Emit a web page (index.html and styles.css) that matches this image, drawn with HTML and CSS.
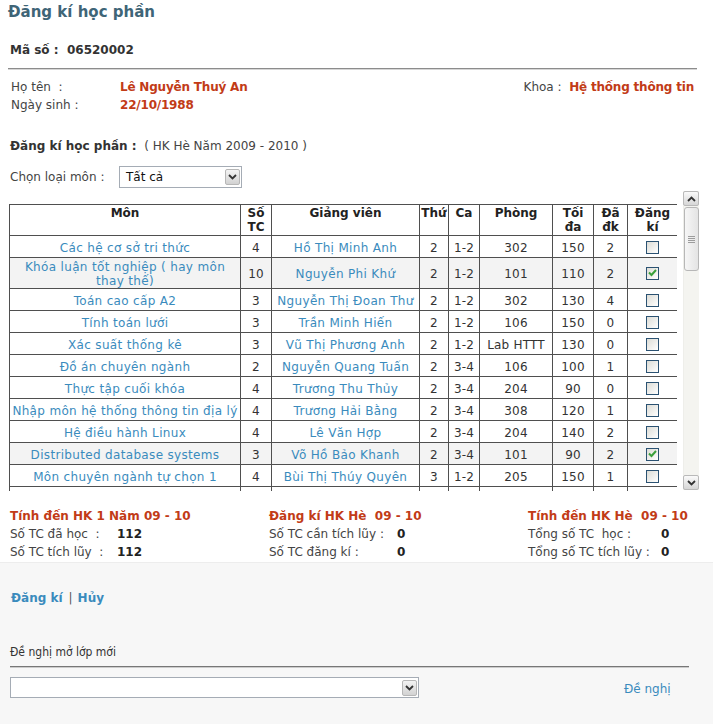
FILE: index.html
```html
<!DOCTYPE html>
<html lang="vi">
<head>
<meta charset="utf-8">
<title>Đăng kí học phần</title>
<link rel="stylesheet" href="styles.css">
</head>
<body>
<div class="top">
  <h1 class="title">Đăng kí học phần</h1>
  <div class="ms">Mã số :&nbsp; 06520002</div>
  <div class="rule"></div>
  <div class="info">
    <div class="info-left">
      <span class="lbl">Họ tên&nbsp; :</span><span class="val">Lê Nguyễn Thuý An</span>
      <span class="lbl">Ngày sinh :</span><span class="val">22/10/1988</span>
    </div>
    <div class="info-right"><span class="lbl2">Khoa :&nbsp; </span><span class="val">Hệ thống thông tin</span></div>
  </div>
  <div class="ky"><b>Đăng kí học phần :</b>&nbsp; ( HK Hè Năm 2009 - 2010 )</div>
  <div class="filter">
    <span class="flabel">Chọn loại môn :</span>
    <div class="sel sel-small"><span class="sel-text">Tất cả</span><span class="sel-btn"><svg width="9" height="6" viewBox="0 0 9 6"><path d="M1 1 L4.5 4.5 L8 1" fill="none" stroke="#333" stroke-width="1.8"/></svg></span></div>
  </div>

  <div class="grid-area">
    <div class="grid-view">
      <table class="grid">
        <colgroup>
          <col style="width:231px"><col style="width:31px"><col style="width:148px"><col style="width:29px"><col style="width:31px"><col style="width:73px"><col style="width:41px"><col style="width:34px"><col style="width:50px">
        </colgroup>
        <thead>
          <tr><th>Môn</th><th>Số<br>TC</th><th>Giảng viên</th><th>Thứ</th><th>Ca</th><th>Phòng</th><th>Tối<br>đa</th><th>Đã<br>đk</th><th>Đăng<br>kí</th></tr>
        </thead>
        <tbody>
          <tr><td class="lk">Các hệ cơ sở tri thức</td><td>4</td><td class="lk">Hồ Thị Minh Anh</td><td>2</td><td>1-2</td><td>302</td><td>150</td><td>2</td><td><span class="cb"></span></td></tr>
          <tr class="sel-row"><td class="lk">Khóa luận tốt nghiệp ( hay môn thay thế)</td><td>10</td><td class="lk">Nguyễn Phi Khứ</td><td>2</td><td>1-2</td><td>101</td><td>110</td><td>2</td><td><span class="cb on"><svg width="9" height="8" viewBox="0 0 9 8"><path d="M1 3.5 L3.5 6 L8 1" fill="none" stroke="#3aa03a" stroke-width="2"/></svg></span></td></tr>
          <tr><td class="lk">Toán cao cấp A2</td><td>3</td><td class="lk">Nguyễn Thị Đoan Thư</td><td>2</td><td>1-2</td><td>302</td><td>130</td><td>4</td><td><span class="cb"></span></td></tr>
          <tr><td class="lk">Tính toán lưới</td><td>3</td><td class="lk">Trần Minh Hiến</td><td>2</td><td>1-2</td><td>106</td><td>150</td><td>0</td><td><span class="cb"></span></td></tr>
          <tr><td class="lk">Xác suất thống kê</td><td>3</td><td class="lk">Vũ Thị Phương Anh</td><td>2</td><td>1-2</td><td>Lab HTTT</td><td>130</td><td>0</td><td><span class="cb"></span></td></tr>
          <tr><td class="lk">Đồ án chuyên ngành</td><td>2</td><td class="lk">Nguyễn Quang Tuấn</td><td>2</td><td>3-4</td><td>106</td><td>100</td><td>1</td><td><span class="cb"></span></td></tr>
          <tr><td class="lk">Thực tập cuối khóa</td><td>4</td><td class="lk">Trương Thu Thủy</td><td>2</td><td>3-4</td><td>204</td><td>90</td><td>0</td><td><span class="cb"></span></td></tr>
          <tr><td class="lk">Nhập môn hệ thống thông tin địa lý</td><td>4</td><td class="lk">Trương Hải Bằng</td><td>2</td><td>3-4</td><td>308</td><td>120</td><td>1</td><td><span class="cb"></span></td></tr>
          <tr><td class="lk">Hệ điều hành Linux</td><td>4</td><td class="lk">Lê Văn Hợp</td><td>2</td><td>3-4</td><td>204</td><td>140</td><td>2</td><td><span class="cb"></span></td></tr>
          <tr class="sel-row"><td class="lk">Distributed database systems</td><td>3</td><td class="lk">Võ Hồ Bảo Khanh</td><td>2</td><td>3-4</td><td>101</td><td>90</td><td>2</td><td><span class="cb on"><svg width="9" height="8" viewBox="0 0 9 8"><path d="M1 3.5 L3.5 6 L8 1" fill="none" stroke="#3aa03a" stroke-width="2"/></svg></span></td></tr>
          <tr><td class="lk">Môn chuyên ngành tự chọn 1</td><td>4</td><td class="lk">Bùi Thị Thúy Quyên</td><td>3</td><td>1-2</td><td>205</td><td>150</td><td>1</td><td><span class="cb"></span></td></tr>
          <tr><td class="lk">Môn chuyên ngành tự chọn 2</td><td>4</td><td class="lk">Đỗ Phúc</td><td>3</td><td>3-4</td><td>302</td><td>150</td><td>0</td><td><span class="cb"></span></td></tr>
        </tbody>
      </table>
    </div>
    <div class="vscroll">
      <div class="sb-btn"><svg width="9" height="6" viewBox="0 0 9 6"><path d="M1 5 L4.5 1.5 L8 5" fill="none" stroke="#333" stroke-width="1.8"/></svg></div>
      <div class="sb-track">
        <div class="sb-thumb"><span class="grip"></span></div>
      </div>
      <div class="sb-btn"><svg width="9" height="6" viewBox="0 0 9 6"><path d="M1 1 L4.5 4.5 L8 1" fill="none" stroke="#333" stroke-width="1.8"/></svg></div>
    </div>
  </div>

  <div class="stats">
    <div class="stat-col">
      <div class="stat-head">Tính đến HK 1 Năm 09 - 10</div>
      <div class="stat-row"><span class="sl w1">Số TC đã học&nbsp; :</span><b>112</b></div>
      <div class="stat-row"><span class="sl w1">Số TC tích lũy&nbsp; :</span><b>112</b></div>
    </div>
    <div class="stat-col">
      <div class="stat-head">Đăng kí HK Hè&nbsp; 09 - 10</div>
      <div class="stat-row"><span class="sl w2">Số TC cần tích lũy :</span><b>0</b></div>
      <div class="stat-row"><span class="sl w2">Số TC đăng kí :</span><b>0</b></div>
    </div>
    <div class="stat-col">
      <div class="stat-head">Tính đến HK Hè&nbsp; 09 - 10</div>
      <div class="stat-row"><span class="sl w3">Tổng số TC&nbsp; học :</span><b>0</b></div>
      <div class="stat-row"><span class="sl w3">Tổng số TC tích lũy :</span><b>0</b></div>
    </div>
  </div>
</div>

<div class="bottom">
  <div class="actions"><a class="act">Đăng kí</a><span class="bar">|</span><a class="act">Hủy</a></div>
  <div class="propose-title">Đề nghị mở lớp mới</div>
  <div class="rule rule2"></div>
  <div class="propose-row">
    <div class="sel sel-wide"><span class="sel-text"></span><span class="sel-btn"><svg width="9" height="6" viewBox="0 0 9 6"><path d="M1 1 L4.5 4.5 L8 1" fill="none" stroke="#333" stroke-width="1.8"/></svg></span></div>
    <a class="propose-link">Đề nghị</a>
  </div>
</div>
</body>
</html>
```

FILE: styles.css
```css
html, body {
  margin: 0;
  padding: 0;
  background: #ffffff;
}
body {
  width: 713px;
  height: 724px;
  overflow: hidden;
  font-family: "DejaVu Sans", Verdana, sans-serif;
  font-size: 12px;
  color: #333333;
}
.top {
  padding: 0 8px;
}
.title {
  margin: 0;
  padding-top: 3px;
  font-size: 15px;
  line-height: 18px;
  font-weight: bold;
  color: #3f6577;
}
.ms {
  margin-top: 22px;
  padding-left: 2px;
  font-weight: bold;
  font-size: 12px;
  line-height: 14px;
  color: #333;
}
.rule {
  margin-top: 11px;
  height: 0;
  border-top: 1px solid #8c8c8c;
  border-bottom: 1px solid #d6d6d6;
  width: 689px;
}
.info {
  margin-top: 8px;
  display: flex;
  justify-content: space-between;
  width: 683px;
  padding-left: 3px;
  line-height: 18px;
}
.info-left {
  display: grid;
  grid-template-columns: 109px auto;
}
.lbl, .lbl2 {
  color: #444;
}
.val {
  color: #c23b17;
  font-weight: bold;
  letter-spacing: -0.2px;
}
.ky {
  margin-top: 24px;
  padding-left: 2px;
  line-height: 16px;
  color: #444;
}
.ky b {
  color: #333;
}
.filter {
  margin-top: 12px;
  display: flex;
  align-items: center;
  padding-left: 2px;
}
.flabel {
  width: 109px;
  color: #444;
}
.sel {
  display: flex;
  align-items: center;
  height: 20px;
  border: 1px solid #a5acb5;
  background: #fff;
  box-sizing: border-box;
}
.sel-small {
  width: 123px;
  height: 22px;
}
.sel-text {
  flex: 1;
  padding-left: 6px;
  color: #111;
}
.sel-btn {
  width: 15px;
  height: 16px;
  margin-right: 1px;
  border: 1px solid #b7b7b7;
  border-radius: 2px;
  background: linear-gradient(#f3f3f3, #d2d2d2);
  display: flex;
  align-items: center;
  justify-content: center;
  box-sizing: border-box;
}
.grid-area {
  margin-top: 3px;
  display: flex;
  align-items: flex-start;
  width: 690px;
  padding-left: 1px;
}
.grid-view {
  width: 669px;
  height: 287px;
  margin-top: 13px;
  overflow: hidden;
}
.grid {
  border-collapse: collapse;
  table-layout: fixed;
  width: 668px;
}
.grid th, .grid td {
  border: 1px solid #4f4f4f;
  text-align: center;
  line-height: 14px;
  padding: 1px 1px;
  white-space: normal;
}
.grid th {
  vertical-align: top;
  font-weight: bold;
  color: #222;
  white-space: nowrap;
  padding: 1px 1px;
}
.grid td {
  vertical-align: middle;
  height: 19px;
  padding: 2px 1px 0 1px;
  color: #333;
  letter-spacing: 0.2px;
}
.grid td.lk {
  color: #3a8bbd;
  letter-spacing: 0.33px;
}
.grid tr.sel-row td {
  background: #f3f3f3;
}
.cb {
  display: inline-block;
  width: 13px;
  height: 13px;
  box-sizing: border-box;
  border: 1px solid #2b5272;
  background: linear-gradient(135deg, #dcdcd6, #ffffff);
  vertical-align: middle;
  margin: 2px 0 3px;
}
.cb svg {
  display: block;
  margin: 1px 0 0 1px;
}
.vscroll {
  margin-left: 6px;
  width: 16px;
  height: 299px;
  display: flex;
  flex-direction: column;
  background: #f2f2ee;
}
.sb-btn {
  width: 16px;
  height: 15px;
  box-sizing: border-box;
  border: 1px solid #b9b9b9;
  border-radius: 2px;
  background: linear-gradient(#fafafa, #d6d6d6);
  display: flex;
  align-items: center;
  justify-content: center;
}
.sb-track {
  flex: 1;
  background: #f4f4f0;
  border-left: 1px solid #eeeeea;
}
.sb-thumb {
  margin-top: 1px;
  height: 64px;
  width: 15px;
  box-sizing: border-box;
  border: 1px solid #b7b7b7;
  border-radius: 3px;
  background: linear-gradient(90deg, #f6f6f6, #e4e4e4);
  display: flex;
  align-items: center;
  justify-content: center;
}
.grip {
  width: 7px;
  height: 7px;
  background: repeating-linear-gradient(#9c9c9c 0 1px, transparent 1px 2px);
}
.stats {
  margin-top: 16px;
  display: grid;
  grid-template-columns: 259px 259px auto;
  padding-left: 2px;
  line-height: 18px;
}
.stat-head {
  font-weight: bold;
  color: #c23b17;
}
.stat-row {
  color: #444;
}
.stat-row b {
  color: #222;
}
.sl {
  display: inline-block;
}
.w1 { width: 107px; }
.w2 { width: 128px; }
.w3 { width: 133px; }
.bottom {
  margin-top: 1px;
  border-top: 1px solid #ededed;
  background: #f7f7f7;
  height: 170px;
  padding: 0 8px;
}
.actions {
  padding-top: 27px;
  padding-left: 3px;
  line-height: 16px;
  font-weight: bold;
}
.act {
  color: #3a8bbd;
}
.bar {
  color: #555;
  font-weight: normal;
  margin: 0 5px 0 6px;
}
.propose-title {
  margin-top: 39px;
  padding-left: 2px;
  font-family: "DejaVu Sans Condensed", "DejaVu Sans", sans-serif;
  font-size: 12px;
  line-height: 14px;
  color: #333;
}
.rule2 {
  margin-top: 7px;
  width: 679px;
  margin-left: 2px;
  border-top: 1px solid #777;
  border-bottom: 1px solid #ccc;
}
.propose-row {
  margin-top: 9px;
  display: flex;
  align-items: center;
  padding-left: 2px;
}
.sel-wide {
  width: 409px;
  height: 21px;
}
.propose-link {
  margin-left: 205px;
  margin-top: 2px;
  color: #3a8bbd;
}
```
